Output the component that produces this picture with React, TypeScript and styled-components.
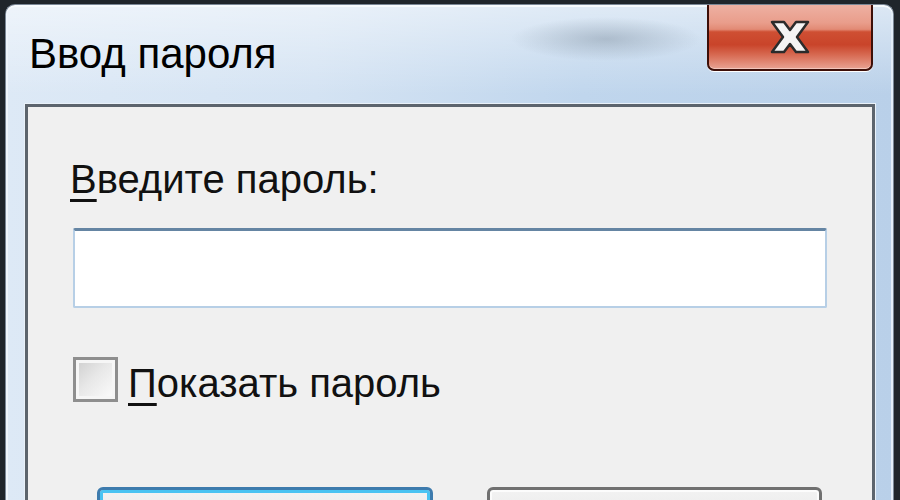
import styled, { createGlobalStyle } from 'styled-components'

const GlobalStyle = createGlobalStyle`
  html, body {
    margin: 0;
    height: 500px;
    overflow: hidden;
    background: #1f252b;
    font-family: 'Liberation Sans', Arial, sans-serif;
  }
`

const Window = styled.div`
  margin: 4px 6px 0 5px;
  height: 496px;
  box-sizing: border-box;
  border: 1px solid #7a8796;
  border-bottom: none;
  border-radius: 10px 10px 0 0;
  overflow: hidden;
  display: flex;
  flex-direction: column;
  background:
    radial-gradient(ellipse 95px 22px at 600px 34px, rgba(120, 136, 152, 0.42), rgba(120, 136, 152, 0) 100%),
    linear-gradient(to bottom, rgba(255, 255, 255, 0.5), rgba(255, 255, 255, 0) 90px),
    linear-gradient(to right, #dde9f6 0%, #d4e3f3 35%, #c0d6ed 65%, #b9d0e9 100%);
  box-shadow: inset 0 2px 0 #f6fafd, inset 2px 0 0 #eef5fc, inset -2px 0 0 #e2edf8;
`

const TitleBar = styled.div`
  height: 99px;
  flex-shrink: 0;
  display: flex;
  align-items: flex-start;
  justify-content: space-between;
  padding: 0 20px 0 23px;
`

const Title = styled.h1`
  margin: 28px 0 0;
  font-size: 42px;
  line-height: 42px;
  font-weight: normal;
  color: #000;
`

const CloseButton = styled.button`
  width: 166px;
  height: 66px;
  padding: 0;
  display: flex;
  align-items: flex-start;
  justify-content: center;
  border: 2px solid #3d0f08;
  border-top: none;
  border-radius: 0 0 7px 7px;
  background: linear-gradient(
    to bottom,
    #eeb0a2 0%,
    #e99d8b 28%,
    #e28a75 38%,
    #cf4f33 42%,
    #c9442a 62%,
    #d76a52 78%,
    #e9a393 100%
  );
  box-shadow: 0 1px 0 #ffffff, inset 0 -1px 0 rgba(255, 255, 255, 0.4);

  svg {
    margin-top: 14px;
  }
`

const Panel = styled.div`
  flex: 1;
  margin: 0 18px 0 19px;
  border: 3px solid #5c646d;
  border-bottom: none;
  background: #f0f0f0;
  padding: 52px 45px 0;
  display: flex;
  flex-direction: column;
  box-shadow: 0 0 0 1px #e9f1f9;
`

const Label = styled.label`
  display: block;
  margin-left: -3px;
  font-size: 40px;
  line-height: 40px;
  color: #111;
`

const Key = styled.span`
  text-decoration: underline;
  text-decoration-thickness: 3px;
  text-underline-offset: 6px;
`

const PasswordInput = styled.input`
  margin-top: 29px;
  height: 80px;
  box-sizing: border-box;
  border: 2px solid #b7cfe6;
  border-top: 3px solid #6585a3;
  border-radius: 2px;
  background: #fff;
  outline: none;
  font-size: 40px;
`

const CheckRow = styled.div`
  margin-top: 49px;
  display: flex;
  align-items: flex-start;
  gap: 10px;
`

const CheckBox = styled.span`
  width: 45px;
  height: 45px;
  box-sizing: border-box;
  border: 3px solid #8e8e8e;
  padding: 3px;
  background: #f6f6f6;

  &::after {
    content: '';
    display: block;
    width: 100%;
    height: 100%;
    background: linear-gradient(135deg, #d2d2d2 0%, #e8e8e8 45%, #fafafa 100%);
  }
`

const CheckLabel = styled(Label)`
  margin: 6px 0 0;
`

const Buttons = styled.div`
  margin-top: 84px;
  display: flex;
  gap: 54px;
  padding: 0 5px 0 24px;
`

const Button = styled.button<{ $focused?: boolean }>`
  flex: 1;
  height: 60px;
  border-radius: 6px;
  border: 3px solid ${p => (p.$focused ? '#3d7bad' : '#707070')};
  background: linear-gradient(to bottom, #f2f2f2 0%, #ebebeb 50%, #dddddd 51%, #cfcfcf 100%);
  box-shadow: ${p =>
    p.$focused ? 'inset 0 0 0 3px #49c3f2' : 'inset 0 0 0 2px #fcfcfc'};
`

const CloseGlyph = () => (
  <svg width="42" height="36" viewBox="0 0 42 36">
    <polygon
      points="3,3 15,3 21,11 27,3 39,3 28,18 39,33 27,33 21,25 15,33 3,33 14,18"
      fill="#f4f4f4"
      stroke="#2b2b2b"
      strokeWidth="2.5"
      strokeLinejoin="round"
    />
  </svg>
)

const App = () => (
  <>
    <GlobalStyle />
    <Window>
      <TitleBar>
        <Title>Ввод пароля</Title>
        <CloseButton aria-label="Закрыть">
          <CloseGlyph />
        </CloseButton>
      </TitleBar>
      <Panel>
        <Label htmlFor="pwd">
          <Key>В</Key>ведите пароль:
        </Label>
        <PasswordInput id="pwd" type="password" />
        <CheckRow>
          <CheckBox />
          <CheckLabel>
            <Key>П</Key>оказать пароль
          </CheckLabel>
        </CheckRow>
        <Buttons>
          <Button $focused />
          <Button />
        </Buttons>
      </Panel>
    </Window>
  </>
)

export default App
